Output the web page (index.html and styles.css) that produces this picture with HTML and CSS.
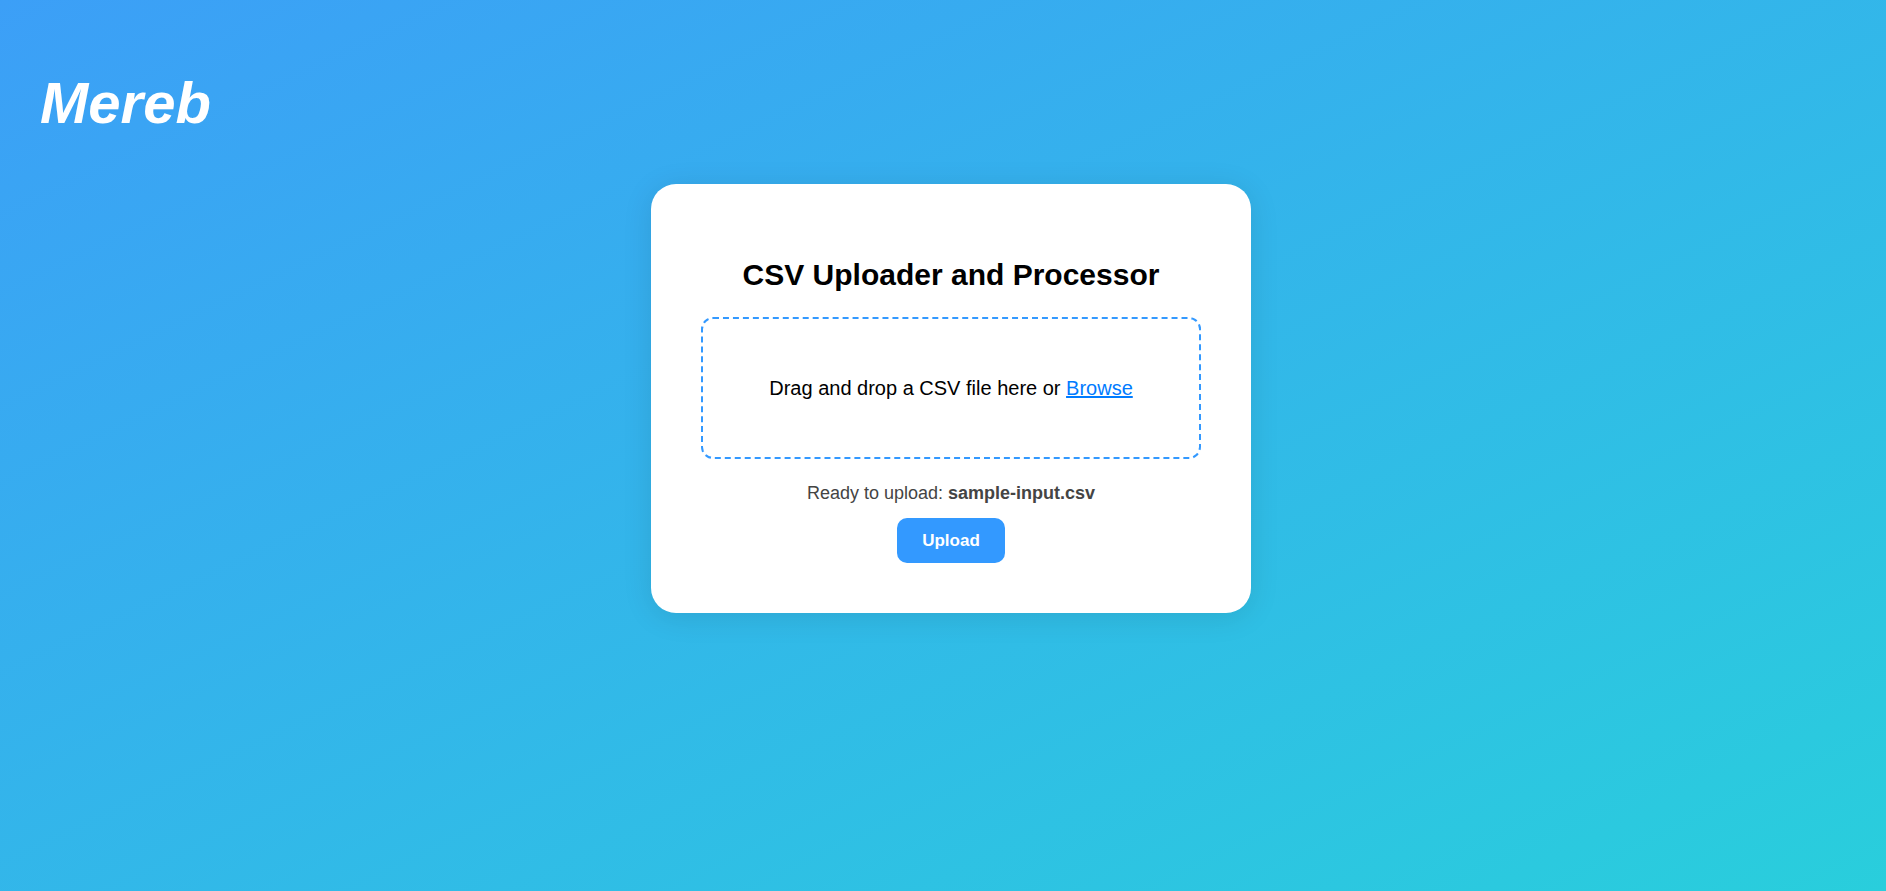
FILE: index.html
```html
<!DOCTYPE html>
<html lang="en">
<head>
<meta charset="utf-8">
<title>Mereb</title>
<link rel="stylesheet" href="styles.css">
</head>
<body>
<div class="page">
  <h1 class="logo">Mereb</h1>
  <main class="card">
    <h2 class="title">CSV Uploader and Processor</h2>
    <div class="dropzone">
      <p class="hint">Drag and drop a CSV file here or <a class="browse" href="#">Browse</a></p>
    </div>
    <p class="status">Ready to upload: <strong>sample-input.csv</strong></p>
    <button class="upload" type="button">Upload</button>
  </main>
</div>
</body>
</html>
```
FILE: styles.css
```css
* { box-sizing: border-box; }
body {
  margin: 0;
  font-family: "Liberation Sans", Arial, sans-serif;
  color: #000;
}
.page {
  min-height: 100vh;
  padding: 40px 24px 40px 40px;
  background: linear-gradient(to bottom right, #3c9ff7, #29cedc);
}
.logo {
  margin: 30px 0 49px;
  font-size: 58px;
  line-height: 65px;
  font-style: italic;
  color: #fff;
}
.card {
  width: 600px;
  max-width: 100%;
  margin: 0 auto;
  padding: 50px;
  border-radius: 25px;
  background: #fff;
  box-shadow: 0 4px 30px rgba(0, 0, 0, 0.1);
  text-align: center;
}
.title {
  margin: 23px 0 25px;
  font-size: 30px;
  line-height: 35px;
}
.dropzone {
  padding: 40px;
  border: 2px dashed #3399ff;
  border-radius: 12px;
}
.hint {
  margin: 18px 0;
  font-size: 20px;
  line-height: 22px;
}
.browse { color: #007bff; }
.status {
  margin: 24px 0 14px;
  font-size: 18px;
  line-height: 21px;
  color: #444;
}
.upload {
  display: block;
  margin: 0 auto;
  padding: 12px 25px;
  border: 0;
  border-radius: 10px;
  background: #3399ff;
  color: #fff;
  font: bold 17px/21px "Liberation Sans", Arial, sans-serif;
}
```
